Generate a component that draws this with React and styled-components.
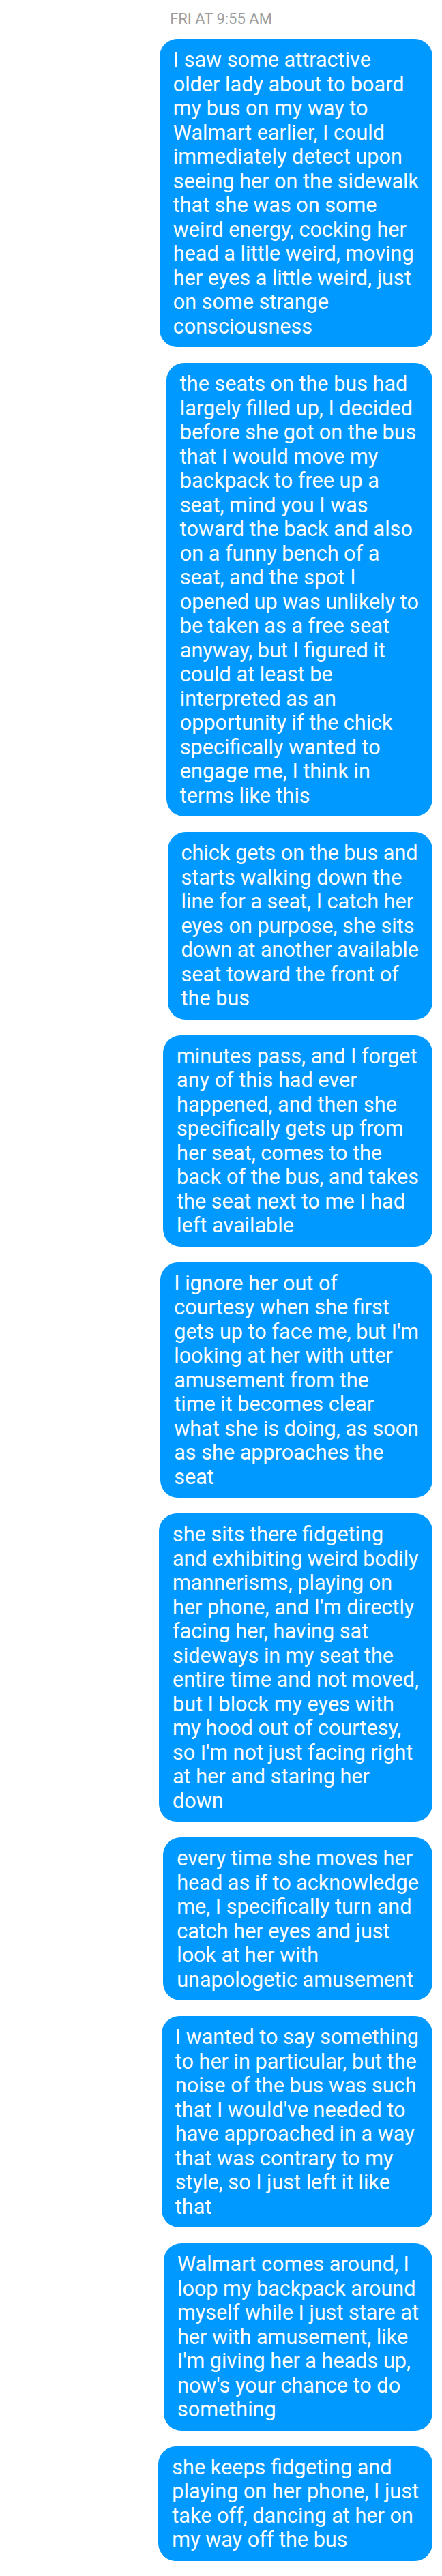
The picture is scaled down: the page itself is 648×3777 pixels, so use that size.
import React from "react";
import styled, { createGlobalStyle } from "styled-components";

const GlobalStyle = createGlobalStyle`
  html, body {
    margin: 0;
    padding: 0;
    background: #ffffff;
  }
  body {
    font-family: Roboto, "Noto Sans", Arial, sans-serif;
    -webkit-font-smoothing: antialiased;
  }
`;

// each message keeps the line breaks of the original screenshot
const messages = [
  {
    id: "board",
    text: `I saw some attractive
older lady about to board
my bus on my way to
Walmart earlier, I could
immediately detect upon
seeing her on the sidewalk
that she was on some
weird energy, cocking her
head a little weird, moving
her eyes a little weird, just
on some strange
consciousness`,
  },
  {
    id: "seats",
    text: `the seats on the bus had
largely filled up, I decided
before she got on the bus
that I would move my
backpack to free up a
seat, mind you I was
toward the back and also
on a funny bench of a
seat, and the spot I
opened up was unlikely to
be taken as a free seat
anyway, but I figured it
could at least be
interpreted as an
opportunity if the chick
specifically wanted to
engage me, I think in
terms like this`,
  },
  {
    id: "gets-on",
    text: `chick gets on the bus and
starts walking down the
line for a seat, I catch her
eyes on purpose, she sits
down at another available
seat toward the front of
the bus`,
  },
  {
    id: "minutes",
    text: `minutes pass, and I forget
any of this had ever
happened, and then she
specifically gets up from
her seat, comes to the
back of the bus, and takes
the seat next to me I had
left available`,
  },
  {
    id: "ignore",
    text: `I ignore her out of
courtesy when she first
gets up to face me, but I'm
looking at her with utter
amusement from the
time it becomes clear
what she is doing, as soon
as she approaches the
seat`,
  },
  {
    id: "fidget",
    text: `she sits there fidgeting
and exhibiting weird bodily
mannerisms, playing on
her phone, and I'm directly
facing her, having sat
sideways in my seat the
entire time and not moved,
but I block my eyes with
my hood out of courtesy,
so I'm not just facing right
at her and staring her
down`,
  },
  {
    id: "every-time",
    text: `every time she moves her
head as if to acknowledge
me, I specifically turn and
catch her eyes and just
look at her with
unapologetic amusement`,
  },
  {
    id: "say",
    text: `I wanted to say something
to her in particular, but the
noise of the bus was such
that I would've needed to
have approached in a way
that was contrary to my
style, so I just left it like
that`,
  },
  {
    id: "walmart",
    text: `Walmart comes around, I
loop my backpack around
myself while I just stare at
her with amusement, like
I'm giving her a heads up,
now's your chance to do
something`,
  },
  {
    id: "off",
    text: `she keeps fidgeting and
playing on her phone, I just
take off, dancing at her on
my way off the bus`,
  },
];

const App = () => {
  return (
    <>
      <GlobalStyle />
      <Screen>
        <Timestamp>FRI AT 9:55 AM</Timestamp>
        <Thread>
          {messages.map((message) => (
            <Bubble key={message.id}>{message.text}</Bubble>
          ))}
        </Thread>
      </Screen>
    </>
  );
};

export default App;

const Screen = styled.div`
  display: flex;
  flex-direction: column;
  width: 648px;
  padding-top: 15px;
  padding-bottom: 22px;
  background: #ffffff;
`;

const Timestamp = styled.div`
  height: 26px;
  margin-bottom: 16px;
  font-size: 22px;
  line-height: 26px;
  color: #9e9e9e;
  text-align: center;
`;

const Thread = styled.div`
  display: flex;
  flex-direction: column;
  align-items: flex-end;
  gap: 23px;
  padding-right: 14px;
`;

const Bubble = styled.div`
  padding: 13px 20px;
  border-radius: 26px;
  background: #0099ff;
  color: #ffffff;
  font-size: 30.6px;
  line-height: 35.5px;
  white-space: pre;
`;
